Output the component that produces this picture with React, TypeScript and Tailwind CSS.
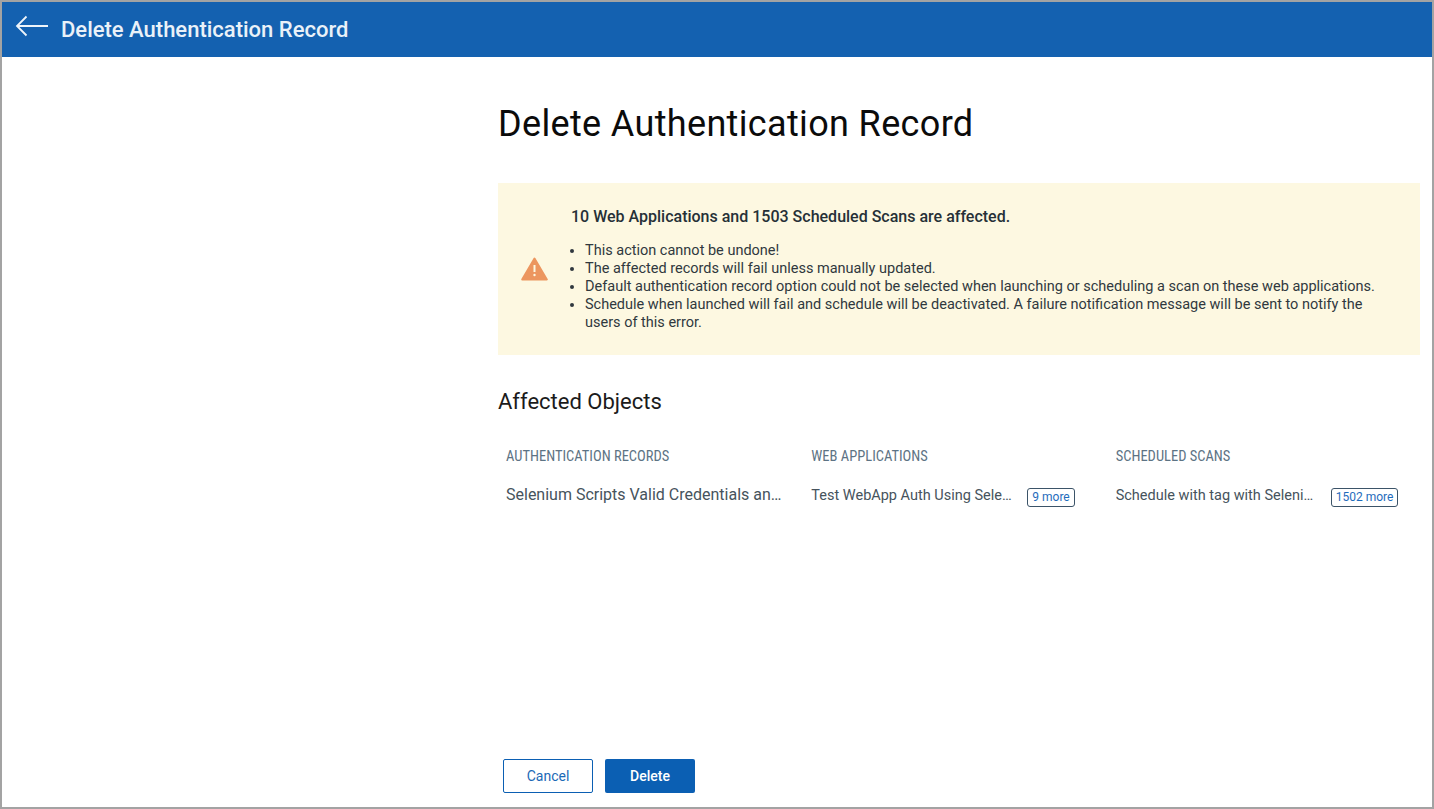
// Delete confirmation page for an authentication record
const NOTES = [
  "This action cannot be undone!",
  "The affected records will fail unless manually updated.",
  "Default authentication record option could not be selected when launching or scheduling a scan on these web applications.",
  "Schedule when launched will fail and schedule will be deactivated. A failure notification message will be sent to notify the users of this error.",
];

const COLUMNS = [
  { title: "WEB APPLICATIONS", value: "Test WebApp Auth Using Selenium Scripts", more: "9 more", textW: "w-[203px]", gap: "gap-[13px]" },
  { title: "SCHEDULED SCANS", value: "Schedule with tag with Selenium Scripts", more: "1502 more", textW: "w-[203px]", gap: "gap-[12px]" },
];

const heading = "text-[14.5px] leading-5 text-[#5d7384] [font-family:'Liberation_Sans_Narrow','Roboto_Condensed',sans-serif]";

export default function App() {
  return (
    <div className="flex h-[809px] w-[1434px] flex-col overflow-hidden border-2 border-[#a3a3a3] bg-white font-['Roboto',sans-serif]">
      <header className="flex h-[55px] shrink-0 items-center bg-[#1461b0] pl-[13px] text-white">
        <svg width="34" height="22" viewBox="0 0 34 22" fill="none" stroke="#eef4fa" strokeWidth="1.8" className="mb-[7px]">
          <path d="M33 11H2M11.5 1.5 2 11l9.500 9.500" />
        </svg>
        <h1 className="ml-[12px] text-[22px] leading-7 font-medium text-[#eaf1f8]">Delete Authentication Record</h1>
      </header>

      <main className="ml-[496px] flex w-[922px] flex-1 flex-col">
        <h2 className="mt-[43px] text-[36px] leading-12 tracking-[0.35px] text-[#0b0b0b]">Delete Authentication Record</h2>

        <section className="mt-[35px] flex h-[172px] items-center bg-[#fdf8e1] pl-[23px]">
          <svg width="27" height="24" viewBox="0 0 27 24" className="shrink-0">
            <path d="M13.500 1.500 25.800 22.500H1.200Z" fill="#ec965f" stroke="#ec965f" strokeWidth="2" strokeLinejoin="round" />
            <path d="M13.500 8v7" stroke="#fdf8e1" strokeWidth="2" />
            <circle cx="13.500" cy="18" r="1.200" fill="#fdf8e1" />
          </svg>
          <div className="ml-[23px] text-[#30383e]">
            <p className="text-[16px] leading-5 font-medium text-[#263037]">10 Web Applications and 1503 Scheduled Scans are affected.</p>
            <ul className="mt-[15px] ml-[14px] w-[800px] list-disc pl-0 text-[14.500px] leading-[18px]">
              {NOTES.map((n) => (
                <li key={n}>{n}</li>
              ))}
            </ul>
          </div>
        </section>

        <h3 className="mt-[33px] text-[22px] leading-7 text-[#1b1b1b]">Affected Objects</h3>

        <div className="mt-[31px] flex pl-2">
          <div className="w-[308px]">
            <div className={heading}>AUTHENTICATION RECORDS</div>
            <div className="mt-[18px] w-[282px] truncate text-[16px] leading-5 text-[#46535c]">Selenium Scripts Valid Credentials and more</div>
          </div>
          {COLUMNS.map((c) => (
            <div key={c.title} className="w-[307px]">
              <div className={heading}>{c.title}</div>
              <div className={`mt-[18px] flex items-center ${c.gap}`}>
                <span className={`${c.textW} truncate text-[14.500px] leading-5 text-[#46535c]`}>{c.value}</span>
                <span className="mt-[3px] rounded-[3px] border border-[#3b5368] px-1 text-[12px] leading-[17px] text-[#1f6cbc]">{c.more}</span>
              </div>
            </div>
          ))}
        </div>

        <footer className="mt-auto mb-[14px] ml-[5px] flex gap-3">
          <button className="h-[34px] w-[90px] rounded-[2px] border border-[#0b5fb3] bg-white text-[14px] text-[#1c69b6]">Cancel</button>
          <button className="h-[34px] w-[90px] rounded-[2px] bg-[#0b5fb3] text-[14px] font-medium text-white">Delete</button>
        </footer>
      </main>
    </div>
  );
}
